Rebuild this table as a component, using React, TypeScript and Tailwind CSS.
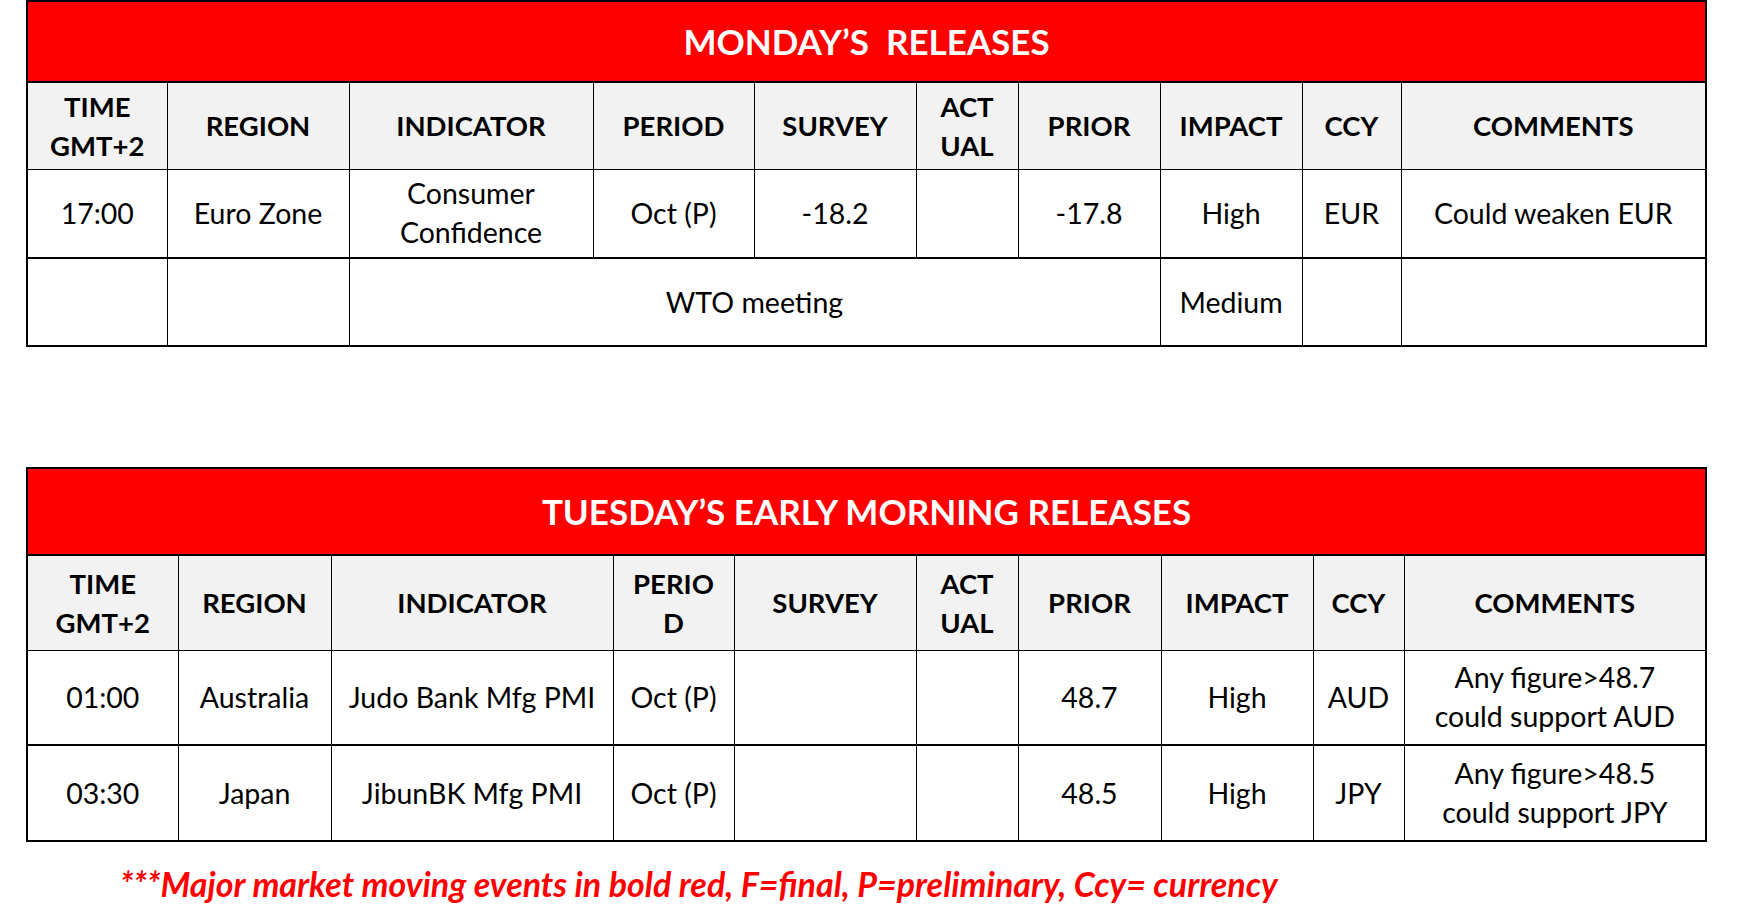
import type { ReactNode } from "react";

type Cell = { text?: ReactNode; span?: number };

const mondayCols = [140, 182, 244, 161, 162, 102, 142, 142, 99, 305];
const tuesdayCols = [151, 153, 282, 121, 182, 102, 143, 152, 91, 302];

const headers: ReactNode[] = [
  <>TIME<br />GMT+2</>,
  "REGION",
  "INDICATOR",
  "PERIOD",
  "SURVEY",
  <>ACT<br />UAL</>,
  "PRIOR",
  "IMPACT",
  "CCY",
  "COMMENTS",
];

const tuesdayHeaders: ReactNode[] = headers.map((h, i) =>
  i === 3 ? <>PERIO<br />D</> : h,
);

const mondayRows: Cell[][] = [
  [
    { text: "17:00" },
    { text: "Euro Zone" },
    { text: <>Consumer<br />Confidence</> },
    { text: "Oct (P)" },
    { text: "-18.2" },
    {},
    { text: "-17.8" },
    { text: "High" },
    { text: "EUR" },
    { text: "Could weaken EUR" },
  ],
  [{}, {}, { text: "WTO meeting", span: 5 }, { text: "Medium" }, {}, {}],
];

const tuesdayRows: Cell[][] = [
  [
    { text: "01:00" },
    { text: "Australia" },
    { text: "Judo Bank Mfg PMI" },
    { text: "Oct (P)" },
    {},
    {},
    { text: "48.7" },
    { text: "High" },
    { text: "AUD" },
    { text: <>Any figure&gt;48.7<br />could support AUD</> },
  ],
  [
    { text: "03:30" },
    { text: "Japan" },
    { text: "JibunBK Mfg PMI" },
    { text: "Oct (P)" },
    {},
    {},
    { text: "48.5" },
    { text: "High" },
    { text: "JPY" },
    { text: <>Any figure&gt;48.5<br />could support JPY</> },
  ],
];

function ReleaseTable({
  title,
  cols,
  head,
  rows,
  titleHeight,
  headHeight,
  rowHeights,
}: {
  title: string;
  cols: number[];
  head: ReactNode[];
  rows: Cell[][];
  titleHeight: string;
  headHeight: string;
  rowHeights: string[];
}) {
  return (
    <table className="w-[1679px] table-fixed border-collapse border-2 border-black">
      <colgroup>
        {cols.map((w, i) => (
          <col key={i} style={{ width: w }} />
        ))}
      </colgroup>
      <thead>
        <tr className={titleHeight}>
          <th
            colSpan={cols.length}
            className="border-2 border-black bg-[#ff0000] text-center text-[35px] font-bold text-white whitespace-pre"
          >
            {title}
          </th>
        </tr>
        <tr className={headHeight}>
          {head.map((h, i) => (
            <th
              key={i}
              className="border border-black bg-[#f2f2f2] px-1 text-center text-[27.5px] font-bold leading-[39px] text-black"
            >
              {h}
            </th>
          ))}
        </tr>
      </thead>
      <tbody>
        {rows.map((row, r) => (
          <tr key={r} className={`${rowHeights[r]} border-b-2 border-black`}>
            {row.map((cell, c) => (
              <td
                key={c}
                colSpan={cell.span}
                className="border border-black px-1 text-center text-[28.5px] leading-[39px] text-black"
              >
                {cell.text}
              </td>
            ))}
          </tr>
        ))}
      </tbody>
    </table>
  );
}

export default function App() {
  return (
    <div className="min-h-[905px] w-[1737px] bg-white font-['Lato',sans-serif]">
      <div className="flex flex-col pl-[26px]">
        <ReleaseTable
          title="MONDAY’S  RELEASES"
          cols={mondayCols}
          head={headers}
          rows={mondayRows}
          titleHeight="h-[81px]"
          headHeight="h-[87px]"
          rowHeights={["h-[89px]", "h-[88px]"]}
        />
        <div className="h-[120px]" />
        <ReleaseTable
          title="TUESDAY’S EARLY MORNING RELEASES"
          cols={tuesdayCols}
          head={tuesdayHeaders}
          rows={tuesdayRows}
          titleHeight="h-[87px]"
          headHeight="h-[95px]"
          rowHeights={["h-[95px]", "h-[96px]"]}
        />
        <p className="mt-[21px] pl-[94px] text-[34px] font-bold italic leading-[42px] text-[#ff0000]">
          ***Major market moving events in bold red, F=final, P=preliminary, Ccy= currency
        </p>
      </div>
    </div>
  );
}
